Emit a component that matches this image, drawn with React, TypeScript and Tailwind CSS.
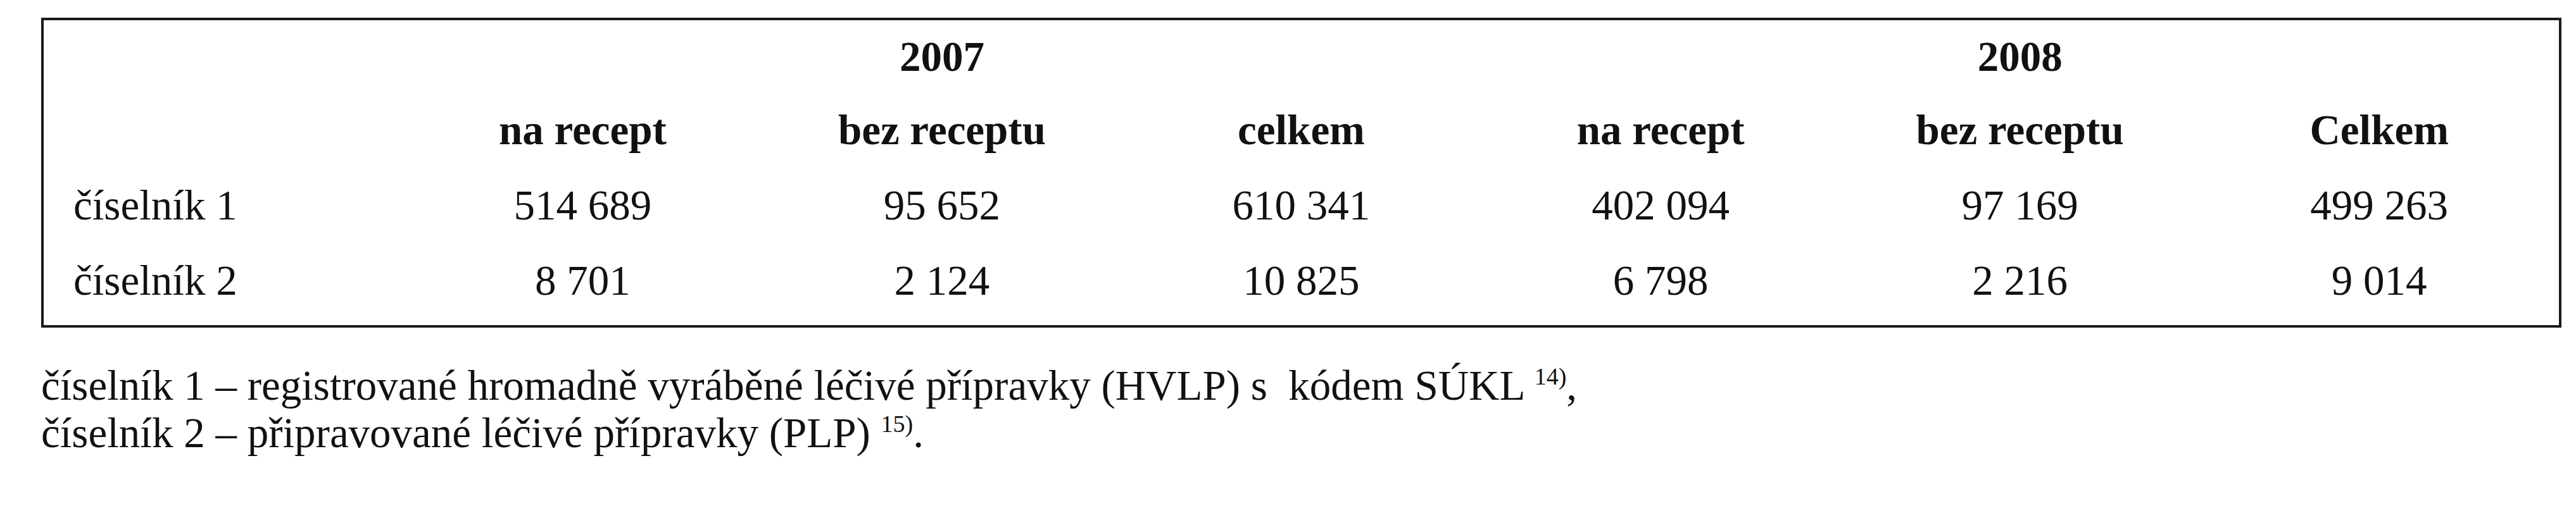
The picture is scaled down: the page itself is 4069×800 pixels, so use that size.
import React from "react";

const rows = [
  { label: "číselník 1", values: ["514 689", "95 652", "610 341", "402 094", "97 169", "499 263"] },
  { label: "číselník 2", values: ["8 701", "2 124", "10 825", "6 798", "2 216", "9 014"] },
];

const heads = ["na recept", "bez receptu", "celkem", "na recept", "bez receptu", "Celkem"];

export default function App() {
  return (
    <div className="w-[4069px] h-[800px] bg-white text-[#111] font-['Liberation_Serif',serif] pt-[28px] pl-[65px]">
      <div className="w-[3981px] border-4 border-[#1a1a1a] pb-[11px] text-[67px]">
        <div className="grid grid-cols-7 h-[114px] leading-[114px] font-bold">
          <div />
          <div className="col-span-3 text-center">2007</div>
          <div className="col-span-3 text-center">2008</div>
        </div>
        <div className="grid grid-cols-7 h-[119px] leading-[119px] font-bold">
          <div />
          {heads.map((h, i) => (
            <div key={i} className="text-center">{h}</div>
          ))}
        </div>
        {rows.map((r) => (
          <div key={r.label} className="grid grid-cols-7 h-[119px] leading-[119px]">
            <div className="pl-[47px]">{r.label}</div>
            {r.values.map((v, i) => (
              <div key={i} className="text-center">{v}</div>
            ))}
          </div>
        ))}
      </div>
      <div className="mt-[54px] text-[67px] leading-[75px]">
        <p>
          číselník 1 – registrované hromadně vyráběné léčivé přípravky (HVLP) s{"\u00a0"} kódem SÚKL{" "}
          <sup className="text-[38px] top-[-24px]">14)</sup>,
        </p>
        <p>
          číselník 2 – připravované léčivé přípravky (PLP){" "}
          <sup className="text-[38px] top-[-24px]">15)</sup>.
        </p>
      </div>
    </div>
  );
}
